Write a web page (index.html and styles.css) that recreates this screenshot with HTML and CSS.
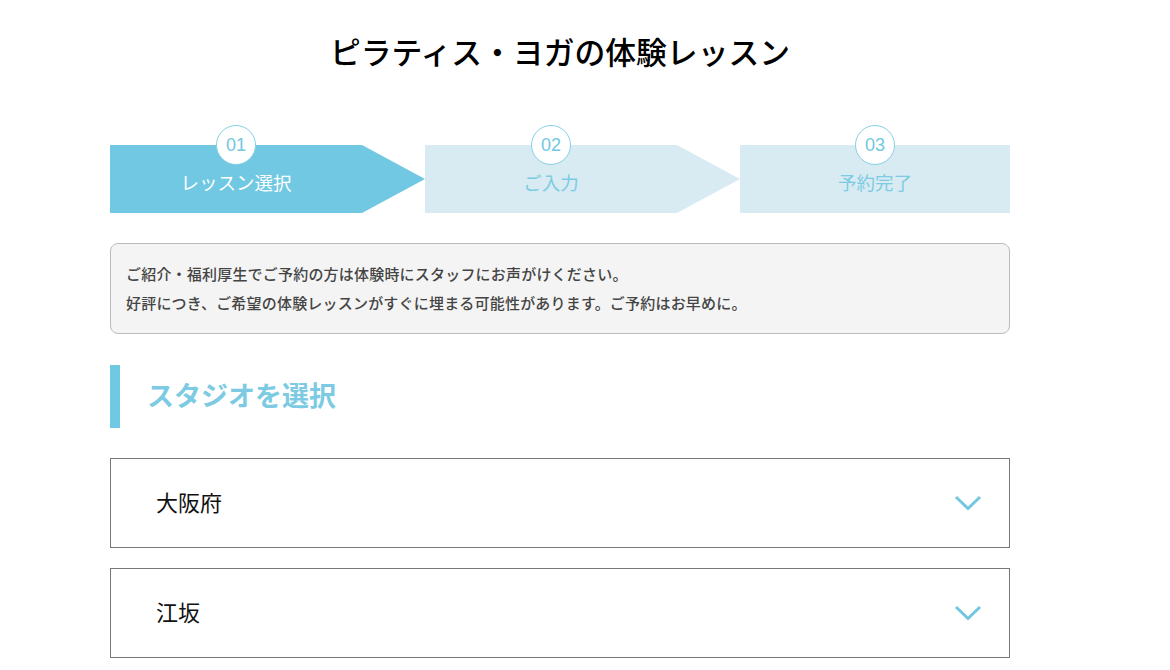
FILE: index.html
```html
<!DOCTYPE html>
<html lang="ja">
<head>
	<meta charset="UTF-8" />
	<title>ピラティス・ヨガの体験レッスン</title>
	<link rel="stylesheet" href="styles.css">
</head>
<body>
	<div class="page">
		<h1 class="title">ピラティス・ヨガの体験レッスン</h1>

		<div class="steps">
			<div class="step active arrow">
				<span class="step-num">01</span>
				<span class="step-label">レッスン選択</span>
			</div>
			<div class="step arrow">
				<span class="step-num">02</span>
				<span class="step-label">ご入力</span>
			</div>
			<div class="step last">
				<span class="step-num">03</span>
				<span class="step-label">予約完了</span>
			</div>
		</div>

		<div class="notice">
			<p>ご紹介・福利厚生でご予約の方は体験時にスタッフにお声がけください。</p>
			<p>好評につき、ご希望の体験レッスンがすぐに埋まる可能性があります。ご予約はお早めに。</p>
		</div>

		<h2 class="section-title">スタジオを選択</h2>

		<div class="select-list">
			<div class="select-item">
				<span class="select-text">大阪府</span>
				<svg class="chevron" width="28" height="16" viewBox="0 0 28 16"><path d="M2 2 L14 13.5 L26 2" fill="none" stroke="#72c7e0" stroke-width="3"/></svg>
			</div>
			<div class="select-item">
				<span class="select-text">江坂</span>
				<svg class="chevron" width="28" height="16" viewBox="0 0 28 16"><path d="M2 2 L14 13.5 L26 2" fill="none" stroke="#72c7e0" stroke-width="3"/></svg>
			</div>
		</div>
	</div>
</body>
</html>
```

FILE: styles.css
```css
body{
	margin:0;
	background:#fff;
	color:#222;
	font-family:"Noto Sans CJK JP","Noto Sans",sans-serif;
}
.page{
	width:900px;
	margin-left:110px;
}
.title{
	margin:0;
	padding-top:31px;
	font-size:30.8px;
	line-height:40px;
	font-weight:500;
	text-align:center;
	color:#000;
}

/* ステップ */
.steps{
	display:flex;
	gap:63px;
	margin-top:74px;
	height:68px;
}
.step{
	position:relative;
	width:252px;
	height:68px;
	background:#d9ebf2;
	text-align:center;
	color:#7ccbe3;
}
.step.last{
	flex:1;
}
.step.arrow:after{
	content:"";
	position:absolute;
	left:100%;
	top:0;
	width:0;
	height:0;
	border-top:34px solid transparent;
	border-bottom:34px solid transparent;
	border-left:63px solid #d9ebf2;
}
.step.active{
	background:#70c8e2;
	color:#fff;
}
.step.active.arrow:after{
	border-left-color:#70c8e2;
}
.step-num{
	position:absolute;
	top:-20px;
	left:50%;
	margin-left:-20px;
	width:38px;
	height:38px;
	border:1px solid #86cfe5;
	border-radius:50%;
	background:#fff;
	color:#70c8e2;
	font-family:"Liberation Sans",sans-serif;
	font-size:18px;
	line-height:38px;
}
.step-label{
	display:block;
	padding-top:25px;
	font-size:18.5px;
	line-height:24px;
}

/* お知らせ */
.notice{
	margin-top:30px;
	padding:15px 15px 16px;
	background:#f4f4f4;
	border:1px solid #bbb;
	border-radius:8px;
	color:#444;
	font-size:15px;
	letter-spacing:0.2px;
	font-weight:500;
}
.notice p{
	margin:0;
	line-height:29px;
}

.section-title{
	margin:31px 0 0;
	height:63px;
	border-left:10px solid #70c8e2;
	padding-left:27px;
	font-size:27px;
	line-height:60px;
	font-weight:700;
	color:#7ccbe3;
}

/* セレクト */
.select-list{
	display:flex;
	flex-direction:column;
	gap:20px;
	margin-top:30px;
}
.select-item{
	display:flex;
	align-items:center;
	justify-content:space-between;
	height:88px;
	border:1px solid #777;
	padding:0 27px 0 45px;
}
.select-text{
	font-size:22px;
	line-height:24px;
	padding-bottom:4px;
	color:#111;
}
.chevron{
	display:block;
}
```
